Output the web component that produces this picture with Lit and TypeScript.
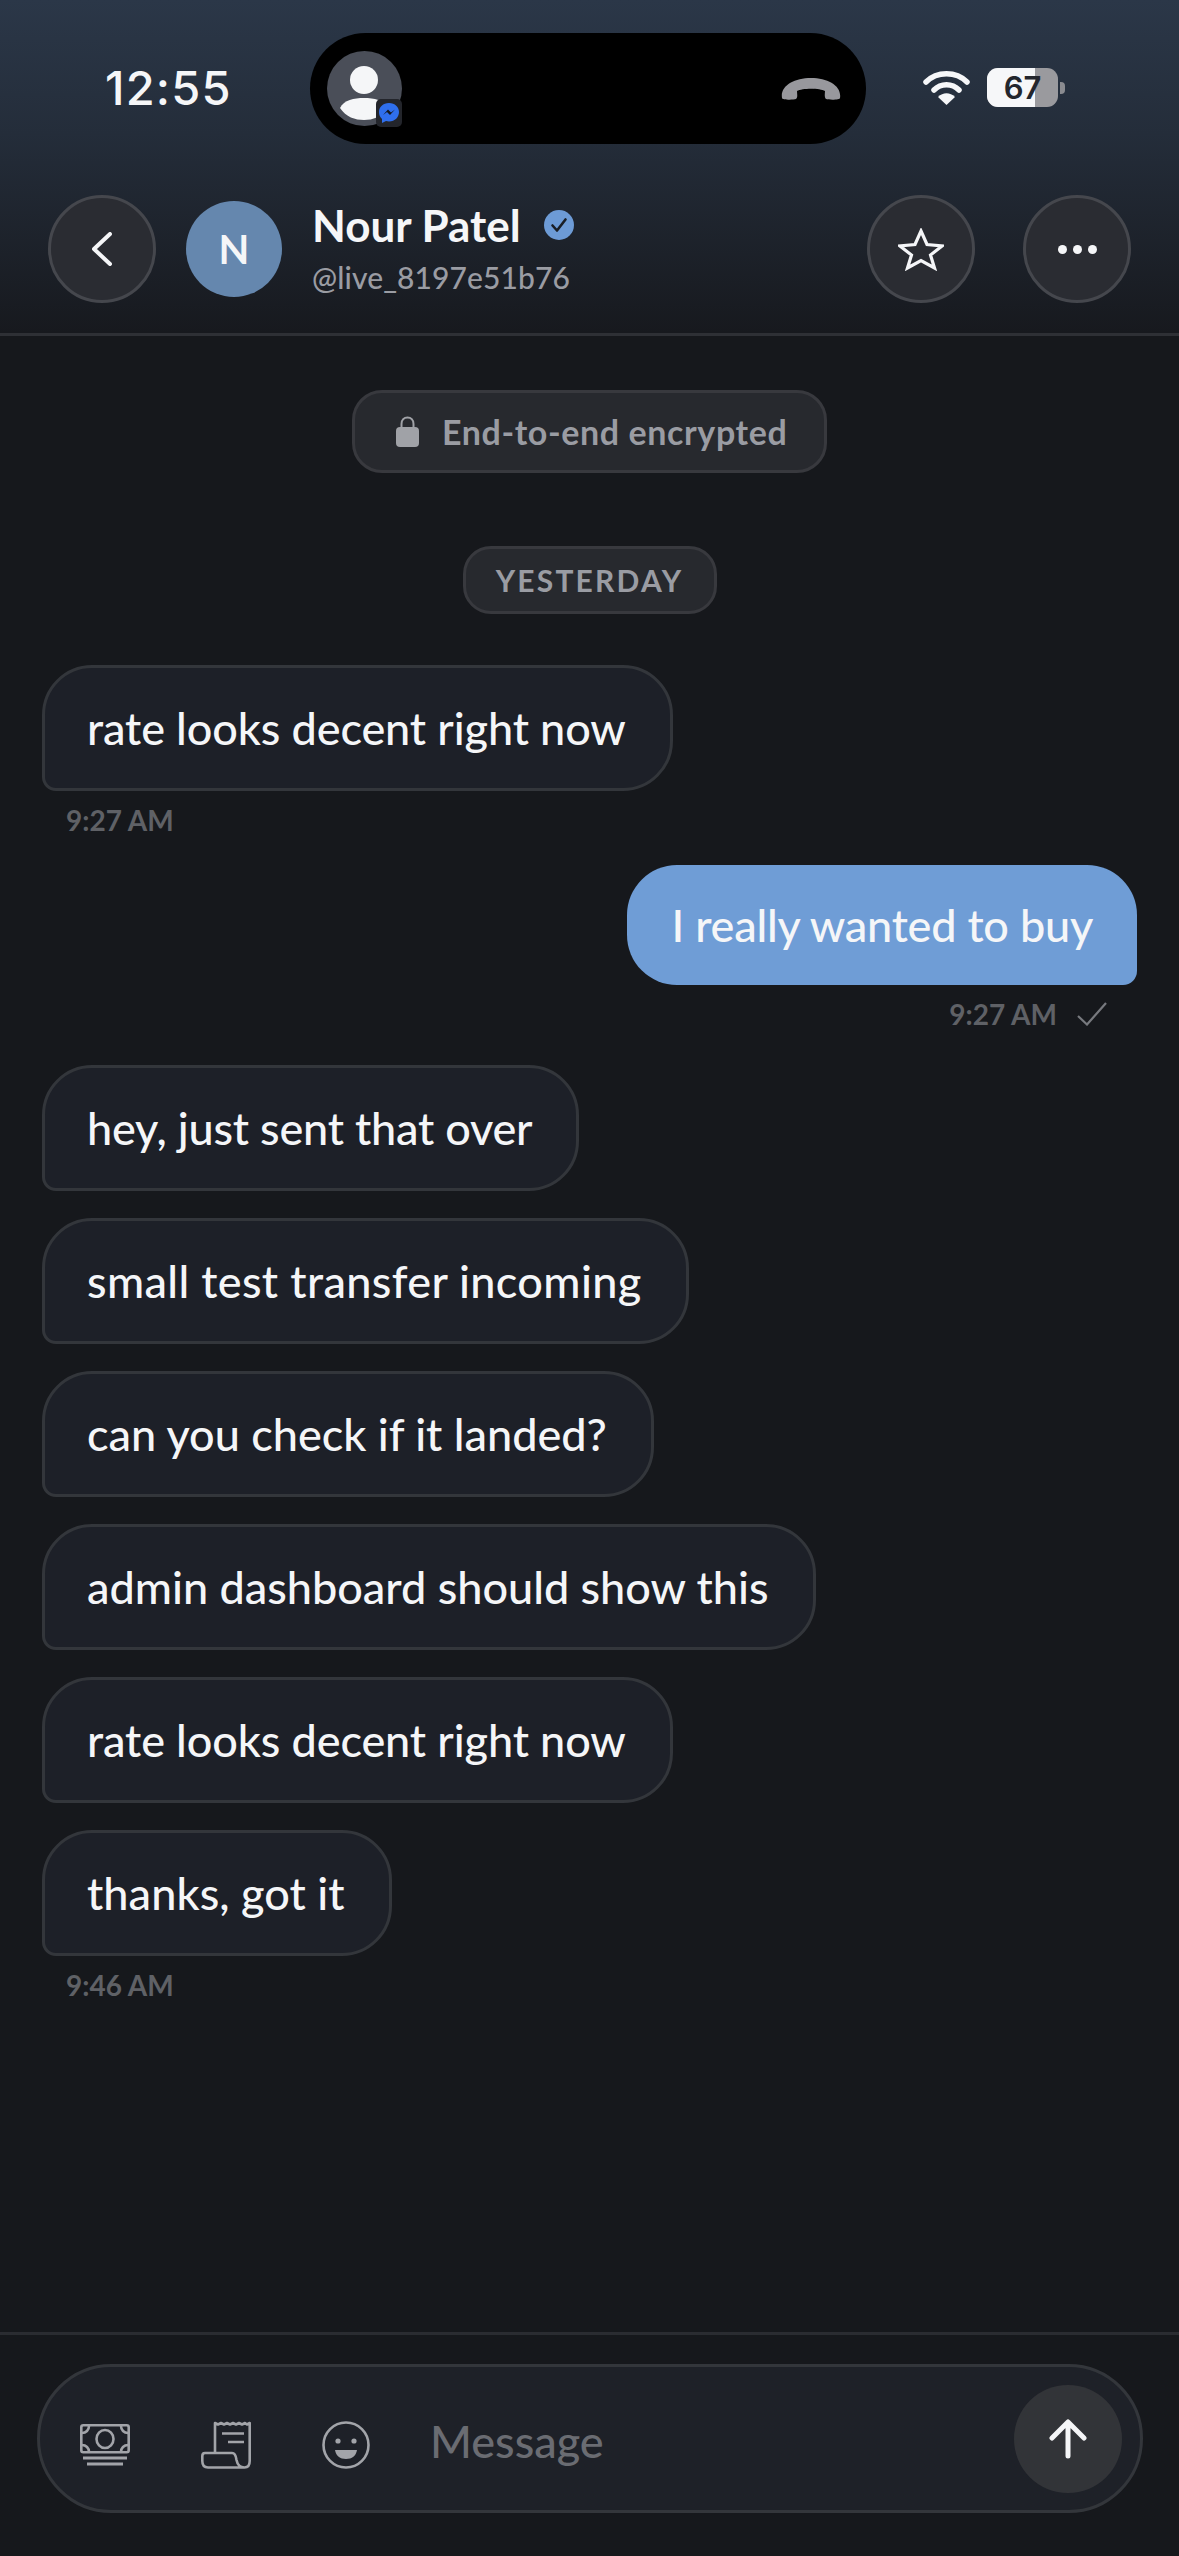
import { LitElement, html, css, svg } from 'lit';
import { customElement } from 'lit/decorators.js';

interface Bubble {
  text: string;
  out?: boolean;
  time?: string;
  gap: number;
  track?: number;
}

const BUBBLES: Bubble[] = [
  { text: 'rate looks decent right now', time: '9:27 AM', gap: 51, track: -0.11 },
  { text: 'I really wanted to buy', out: true, time: '9:27 AM', gap: 27, track: -0.22 },
  { text: 'hey, just sent that over', gap: 33, track: -0.2 },
  { text: 'small test transfer incoming', gap: 27, track: 0.36 },
  { text: 'can you check if it landed?', gap: 27 },
  { text: 'admin dashboard should show this', gap: 27 },
  { text: 'rate looks decent right now', gap: 27, track: -0.11 },
  { text: 'thanks, got it', gap: 27, time: '9:46 AM', track: 0.07 },
];

const BATTERY_LEVEL = 67;

const chevron = svg`<path d="M18 2 L2 17 L18 32" fill="none" stroke="#f5f6f8" stroke-width="4" stroke-linecap="round" stroke-linejoin="round"/>`;
const star = svg`<path d="M23 3 L29 16.5 L44 18 L32.5 27 L36.5 40 L23 32.5 L9.5 40 L13.5 27 L2 18 L17 16.5 Z" fill="none" stroke="#f5f6f8" stroke-width="3.2" stroke-linejoin="miter"/>`;

@customElement('app-root')
export class AppRoot extends LitElement {
  static styles = css`
    :host {
      display: flex;
      flex-direction: column;
      min-height: 2556px;
      width: 1179px;
      background: #16181c;
      color: #f5f6f8;
      font-family: Lato, 'Noto Sans', sans-serif;
    }

    .top {
      background: linear-gradient(#2b3748 0%, #242d3a 40%, #17191e 100%);
      border-bottom: 3px solid #2e3035;
    }

    .status {
      display: flex;
      height: 195px;
      box-sizing: border-box;
      padding-top: 33px;
    }

    .clock {
      width: 310px;
      box-sizing: border-box;
      padding-left: 105px;
      height: 111px;
      line-height: 110px;
      font-family: Inter, sans-serif;
      font-size: 47px;
      font-weight: 500;
      letter-spacing: 1.2px;
    }

    .island {
      display: flex;
      align-items: center;
      justify-content: space-between;
      width: 556px;
      height: 111px;
      box-sizing: border-box;
      padding: 0 25px 0 17px;
      background: #000;
      border-radius: 56px;
    }

    .sys {
      display: flex;
      align-items: center;
      gap: 17px;
      height: 111px;
      margin-left: 57px;
      padding-bottom: 2px;
      box-sizing: border-box;
    }

    .battery-wrap {
      display: flex;
      align-items: center;
      gap: 2px;
    }

    .battery {
      position: relative;
      width: 71px;
      height: 39px;
      border-radius: 11px;
      overflow: hidden;
      background: #9a9a9e;
    }

    .battery-fill {
      position: absolute;
      left: 0;
      top: 0;
      bottom: 0;
      background: #f6f7f9;
    }

    .battery-label {
      position: absolute;
      inset: 0;
      text-align: center;
      line-height: 39px;
      font-family: Inter, sans-serif;
      font-size: 31px;
      font-weight: 600;
      color: #23262d;
    }

    .battery-nub {
      width: 5px;
      height: 12px;
      border-radius: 0 4px 4px 0;
      background: #8a8b90;
    }

    .nav {
      display: flex;
      align-items: center;
      padding: 0 48px 30px;
    }

    .round {
      display: flex;
      align-items: center;
      justify-content: center;
      flex: none;
      width: 108px;
      height: 108px;
      box-sizing: border-box;
      border-radius: 50%;
      background: #2a2c32;
      border: 3px solid #45474d;
    }

    .avatar {
      display: flex;
      align-items: center;
      justify-content: center;
      flex: none;
      width: 96px;
      height: 96px;
      margin: 0 30px 0 30px;
      border-radius: 50%;
      background: #6587ae;
      font-size: 40px;
      font-weight: 700;
    }

    .who {
      flex: 1;
    }

    .name-row {
      display: flex;
      align-items: center;
      gap: 23px;
      height: 46px;
      font-size: 44px;
      font-weight: 700;
    }

    .handle {
      margin-top: 10px;
      line-height: 38px;
      font-size: 30px;
      font-weight: 500;
      letter-spacing: 0.1px;
      color: #9a9ca3;
    }

    .star-btn {
      margin-right: 48px;
    }

    .dots {
      display: flex;
      gap: 6px;
    }

    .dots span {
      width: 9px;
      height: 9px;
      border-radius: 50%;
      background: #f5f6f8;
    }

    .chat {
      display: flex;
      flex: 1;
      flex-direction: column;
      align-items: flex-start;
      padding: 54px 42px 0;
    }

    .pill {
      display: flex;
      align-items: center;
      align-self: center;
      box-sizing: border-box;
      background: #27292e;
      border: 3px solid #38393e;
      color: #9a9ca3;
    }

    .e2e {
      gap: 23px;
      width: 475px;
      height: 83px;
      padding-left: 41px;
      border-radius: 30px;
      font-size: 34px;
      font-weight: 700;
      letter-spacing: 0.6px;
    }

    .day {
      justify-content: center;
      width: 254px;
      height: 68px;
      margin-top: 73px;
      border-radius: 28px;
      font-size: 30px;
      font-weight: 700;
      letter-spacing: 2.2px;
    }

    .bubble {
      box-sizing: border-box;
      padding: 32px 44px 32px 42px;
      line-height: 56px;
      font-size: 45px;
      font-weight: 500;
      white-space: nowrap;
      background: #1d2028;
      border: 3px solid #33363b;
      border-radius: 50px 50px 50px 14px;
    }

    .bubble.out {
      align-self: flex-end;
      border: none;
      padding: 32px 44px;
      background: #6f9dd6;
      border-radius: 50px 50px 14px 50px;
    }

    .time {
      display: flex;
      align-items: center;
      gap: 20px;
      margin: 11px 0 0 24px;
      line-height: 36px;
      font-size: 28px;
      font-weight: 700;
      color: #5f6166;
    }

    .time.out {
      align-self: flex-end;
      margin: 11px 30px 0 0;
    }

    .footer {
      padding: 29px 36px 43px 37px;
      border-top: 3px solid #2a2c31;
    }

    .composer {
      display: flex;
      align-items: center;
      height: 149px;
      box-sizing: border-box;
      padding: 0 18px 0 40px;
      background: #1e2128;
      border: 3px solid #33363b;
      border-radius: 75px;
    }

    .tools {
      display: flex;
      align-items: center;
      gap: 71px;
      margin: 12px 60px 0 0;
    }

    .placeholder {
      flex: 1;
      margin-top: 5px;
      font-size: 45px;
      font-weight: 500;
      color: #6a6c72;
    }

    .send {
      display: flex;
      align-items: center;
      justify-content: center;
      width: 108px;
      height: 108px;
      border-radius: 50%;
      background: #323438;
    }

    svg {
      display: block;
      flex: none;
    }
  `;

  private _statusBar() {
    return html`
      <div class="status">
        <div class="clock">12:55</div>
        <div class="island">
          <svg width="75" height="76" viewBox="0 0 75 76">
            <circle cx="37.5" cy="37.5" r="37.5" fill="#4a4e58"/>
            <circle cx="37" cy="29" r="14" fill="#f5f6f8"/>
            <path d="M13 57 C17 49 27 47 37 47 C47 47 57 49 61 57 C54 66 46 69 37 69 C28 69 19 66 13 57 Z" fill="#f5f6f8"/>
            <rect x="49" y="48" width="26" height="28" rx="5" fill="#23252b"/>
            <path d="M62 52 C56 52 52 56 52 61 C52 64 53 66 55 68 L55 72 L59 70 C60 70 61 70.500 62 70.500 C68 70.500 72 66 72 61 C72 56 68 52 62 52 Z" fill="#2f6fed"/>
            <path d="M56 64 L61 58.500 L64 61.500 L68 58.500 L63 64 L60 61 Z" fill="#15181e"/>
          </svg>
          <svg width="60" height="22" viewBox="0 0 60 22">
            <path d="M1 20 C-1 8 13 0 30 0 S61 8 59 20 C59 22 48 22 45 21 C43 19 44 15 44 13 C39 10 21 10 16 13 C16 16 17 19 15 21 C12 22 1 22 1 20 Z" fill="#98989d"/>
          </svg>
        </div>
        <div class="sys">
          <svg width="47" height="35" viewBox="0 0 47 35">
            <path d="M3 12 C14 1 33 1 44 12" fill="none" stroke="#f6f7f9" stroke-width="5.500" stroke-linecap="round"/>
            <path d="M11 20 C18 13 29 13 36 20" fill="none" stroke="#f6f7f9" stroke-width="5.500" stroke-linecap="round"/>
            <path d="M15 27 C20 22 27 22 32 27 L23.500 35 Z" fill="#f6f7f9"/>
          </svg>
          <div class="battery-wrap">
            <div class="battery">
              <div class="battery-fill" style="width: ${BATTERY_LEVEL}%"></div>
              <div class="battery-label">${BATTERY_LEVEL}</div>
            </div>
            <div class="battery-nub"></div>
          </div>
        </div>
      </div>
    `;
  }

  private _nav() {
    return html`
      <div class="nav">
        <div class="round">
          <svg width="20" height="34" viewBox="0 0 20 34">${chevron}</svg>
        </div>
        <div class="avatar">N</div>
        <div class="who">
          <div class="name-row">
            <span>Nour Patel</span>
            <svg width="30" height="30" viewBox="0 0 30 30">
              <circle cx="15" cy="15" r="15" fill="#6d9bd6"/>
              <path d="M8.500 15.500 L13 20.500 L21.500 9.500" fill="none" stroke="#1a1e25" stroke-width="2.600" stroke-linecap="round" stroke-linejoin="round"/>
            </svg>
          </div>
          <div class="handle">@live_8197e51b76</div>
        </div>
        <div class="round star-btn">
          <svg width="46" height="43" viewBox="0 0 46 43">${star}</svg>
        </div>
        <div class="round">
          <div class="dots"><span></span><span></span><span></span></div>
        </div>
      </div>
    `;
  }

  private _bubble(b: Bubble) {
    return html`
      <div class="bubble ${b.out ? 'out' : ''}" style="margin-top: ${b.gap}px; letter-spacing: ${b.track ?? 0}px">${b.text}</div>
      ${b.time
        ? html`<div class="time ${b.out ? 'out' : ''}">
            <span>${b.time}</span>
            ${b.out
              ? html`<svg width="30" height="24" viewBox="0 0 30 24">
                  <path d="M1 14 L10 22.500 L29 1" fill="none" stroke="#77797e" stroke-width="2.200"/>
                </svg>`
              : ''}
          </div>`
        : ''}
    `;
  }

  private _composer() {
    return html`
      <div class="footer">
        <div class="composer">
          <div class="tools">
            <svg width="50" height="42" viewBox="0 0 50 42" fill="none" stroke="#a2a4a9" stroke-width="2.600">
              <rect x="1.300" y="1.300" width="47.400" height="27" rx="2"/>
              <ellipse cx="25" cy="15" rx="8.500" ry="9"/>
              <path d="M2 9 C6 9 9 6 9 2 M41 2 C41 6 44 9 48 9 M2 21 C6 21 9 24 9 28 M41 28 C41 24 44 21 48 21"/>
              <path d="M3 34 H47 M7 40 H43" stroke-width="3"/>
            </svg>
            <svg width="50" height="48" viewBox="0 0 50 48" fill="none" stroke="#a2a4a9" stroke-width="2.600" stroke-linejoin="round">
              <path d="M14 31 V2 L17 3.500 L20 2 L23 3.500 L26 2 L29 3.500 L32 2 L35 3.500 L38 2 L41 3.500 L44 2 L46 3.500 L48.700 2 V40 C48.700 44 47 46.500 43.500 46.500 C39.500 46.500 36.500 44 35.500 39 C35 35 34 32 31 32 H4 C2 32 1.300 33 1.300 35 V40 C1.300 44 3 46.500 7 46.500 H43.500"/>
              <path d="M21 12.500 H43 M27 21 H43"/>
            </svg>
            <svg width="48" height="48" viewBox="0 0 48 48" fill="none" stroke="#a2a4a9" stroke-width="2.600">
              <circle cx="24" cy="24" r="22.500"/>
              <circle cx="16" cy="20" r="2.600" fill="#a2a4a9" stroke="none"/>
              <circle cx="32" cy="20" r="2.600" fill="#a2a4a9" stroke="none"/>
              <path d="M13 29 H35 C34 35 30 38 24 38 C18 38 14 35 13 29 Z" fill="#a2a4a9" stroke="none"/>
            </svg>
          </div>
          <div class="placeholder">Message</div>
          <div class="send">
            <svg width="38" height="40" viewBox="0 0 38 40" fill="none" stroke="#f5f6f8" stroke-width="5" stroke-linecap="round" stroke-linejoin="round">
              <path d="M19 37 V4 M3 19 L19 3 L35 19"/>
            </svg>
          </div>
        </div>
      </div>
    `;
  }

  render() {
    return html`
      <div class="top">${this._statusBar()} ${this._nav()}</div>
      <div class="chat">
        <div class="pill e2e">
          <svg width="23" height="31" viewBox="0 0 23 31">
            <path d="M5.500 13 V8 C5.500 4 8 1.500 11.500 1.500 C15 1.500 17.500 4 17.500 8 V13" fill="none" stroke="#a0a2a7" stroke-width="2"/>
            <rect y="11" width="23" height="20" rx="4" fill="#a0a2a7"/>
          </svg>
          <span>End-to-end encrypted</span>
        </div>
        <div class="pill day">YESTERDAY</div>
        ${BUBBLES.map((b) => this._bubble(b))}
      </div>
      ${this._composer()}
    `;
  }
}

declare global {
  interface HTMLElementTagNameMap {
    'app-root': AppRoot;
  }
}
